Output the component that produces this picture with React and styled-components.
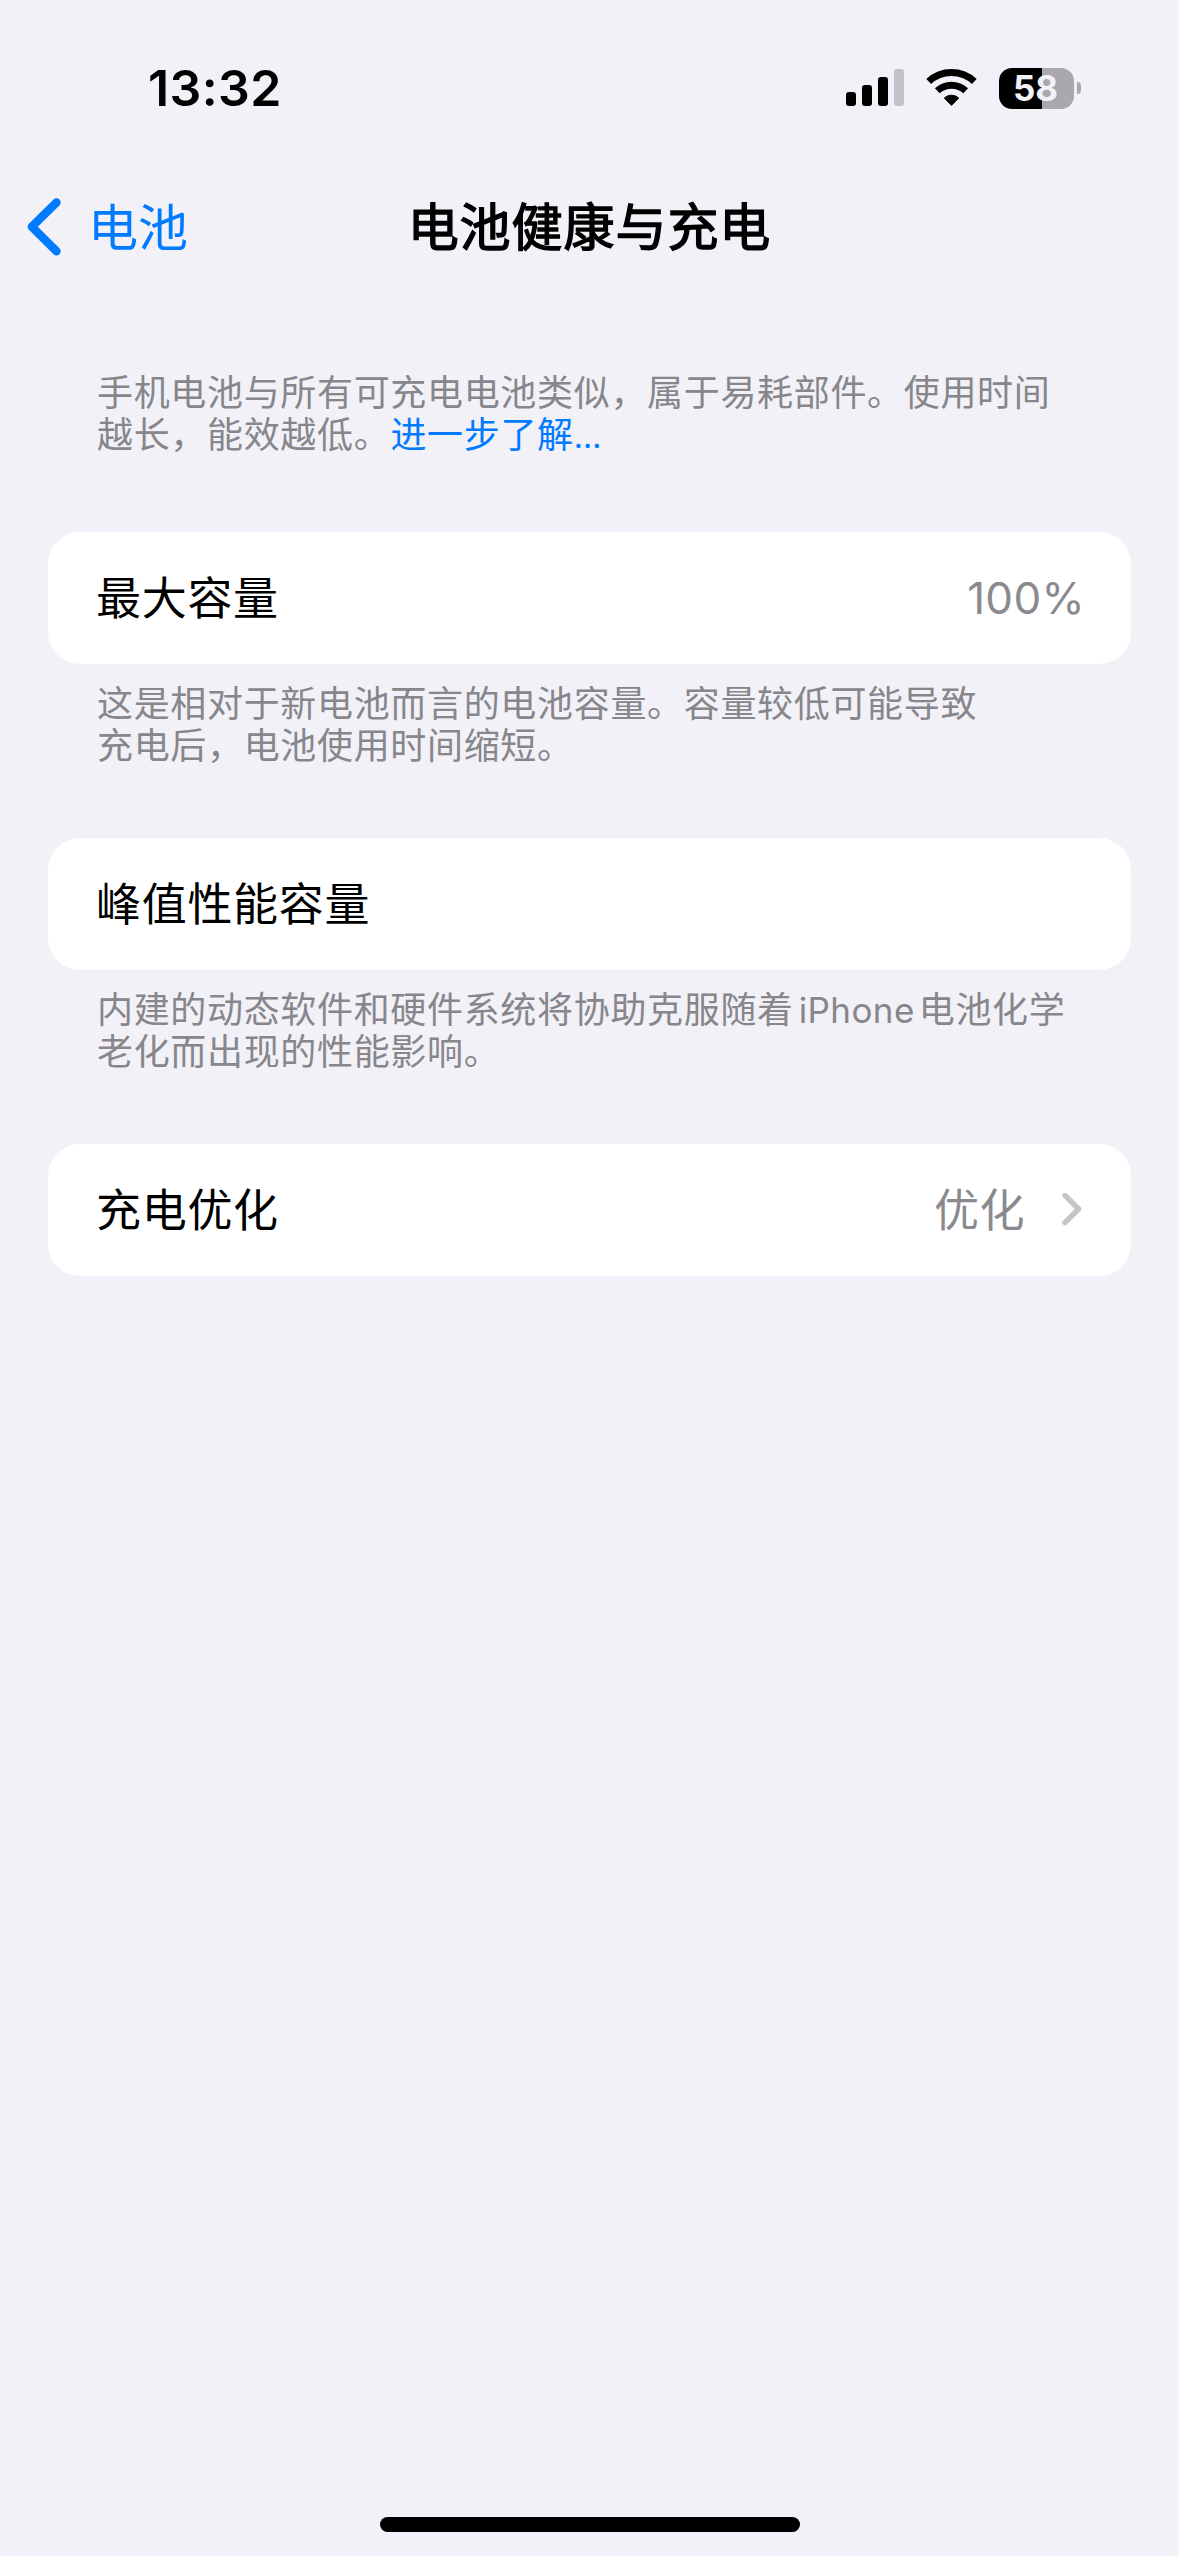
import React from 'react'
import styled, { createGlobalStyle } from 'styled-components';

const GlobalStyle = createGlobalStyle`
  body {
    margin: 0;
    background: #f2f1f7;
  }
  * {
    box-sizing: border-box;
  }
`;

function SignalIcon() {
  return (
    <svg width="58" height="38" viewBox="0 0 58 38">
      <rect x="0" y="23" width="10" height="14" rx="3" />
      <rect x="16" y="16" width="10" height="21" rx="3" />
      <rect x="32" y="8" width="10" height="29" rx="3" />
      <rect x="48" y="0" width="10" height="37" rx="3" fill="#c2c1c7" />
    </svg>
  )
}

function WifiIcon() {
  return (
    <svg width="51" height="38" viewBox="0 0 51 38">
      <g fill="none" stroke="#000" strokeWidth="7">
        <path d="M2.7 12.5A33.5 33.5 0 0 1 48.3 12.5" />
        <path d="M11.3 21.8A20.8 20.8 0 0 1 39.7 21.8" />
      </g>
      <path d="M18.3 29A10.6 10.6 0 0 1 32.7 29L25.5 36.4Z" stroke="#000" strokeLinejoin="round" />
    </svg>
  )
}

function App() {
  return (
    <Phone lang="zh-CN">
      <GlobalStyle />
      <StatusBar>
        <Time>13:32</Time>
        <StatusIcons>
          <SignalIcon />
          <WifiIcon />
          <Battery>
            <BatteryBody>58</BatteryBody>
            <BatteryTip />
          </Battery>
        </StatusIcons>
      </StatusBar>
      <NavBar>
        <BackButton>
          <svg width="34" height="58" viewBox="0 0 34 58">
            <path d="M29.5 4.5L4.8 28.8L29.5 53.2" fill="none" stroke="#007aff" strokeWidth="8.4" strokeLinecap="round" strokeLinejoin="round" />
          </svg>
          <BackText>电池</BackText>
        </BackButton>
        <Title>电池健康与充电</Title>
      </NavBar>
      <Content>
        <Intro>
          手机电池与所有可充电电池类似，属于易耗部件。使用时间<br />
          越长，能效越低。<Link>进一步了解<Dots>…</Dots></Link>
        </Intro>
        <Row>
          <Label>最大容量</Label>
          <Percent>100%</Percent>
        </Row>
        <Footer>
          这是相对于新电池而言的电池容量。容量较低可能导致<br />
          充电后，电池使用时间缩短。
        </Footer>
        <Row>
          <Label>峰值性能容量</Label>
        </Row>
        <Footer>
          内建的动态软件和硬件系统将协助克服随着<Latin>iPhone</Latin>电池化学<br />
          老化而出现的性能影响。
        </Footer>
        <Row>
          <Label>充电优化</Label>
          <Value>
            <ValueText>优化</ValueText>
            <svg width="20" height="34" viewBox="0 0 20 34">
              <path d="M3 2.4L16.6 16L3 29.6" fill="none" stroke="#c5c5c7" strokeWidth="5.4" strokeLinecap="round" strokeLinejoin="round" />
            </svg>
          </Value>
        </Row>
      </Content>
      <HomeIndicator />
    </Phone>
  )
}

const Phone = styled.div`
  display: flex;
  flex-direction: column;
  width: 1179px;
  height: 2556px;
  padding-bottom: 24px;
  background: #f2f1f7;
  color: #000;
  font-family: Inter, "Noto Sans CJK SC", sans-serif;
`;

const StatusBar = styled.header`
  display: flex;
  justify-content: space-between;
  align-items: center;
  height: 176px;
  padding: 0 98px 0 148px;
`;

const Time = styled.div`
  font-size: 50px;
  font-weight: 600;
  letter-spacing: 0.4px;
  line-height: 60px;
`;

const StatusIcons = styled.div`
  display: flex;
  align-items: center;
  gap: 22px;
`;

const Battery = styled.div`
  display: flex;
  align-items: center;
  gap: 3px;
`;

const BatteryBody = styled.div`
  width: 75px;
  height: 41px;
  padding-right: 2px;
  border-radius: 13px;
  background: linear-gradient(to right, #000 43px, #a9a8ad 43px);
  color: #f2f1f7;
  font-size: 35px;
  font-weight: 700;
  line-height: 41px;
  text-align: center;
`;

const BatteryTip = styled.div`
  width: 4px;
  height: 12px;
  border-radius: 0 4px 4px 0;
  background: #a9a8ad;
`;

const NavBar = styled.nav`
  display: grid;
  grid-template-columns: 1fr auto 1fr;
  align-items: center;
  height: 102px;
  padding: 0 27px;
`;

const BackButton = styled.div`
  display: flex;
  align-items: center;
  gap: 27px;
  color: #007aff;
`;

const BackText = styled.span`
  padding-top: 2px;
  font-size: 50px;
  line-height: 60px;
`;

const Title = styled.h1`
  margin: 0;
  padding-top: 2px;
  font-size: 51px;
  font-weight: 400;
  -webkit-text-stroke: 1.4px #000;
  letter-spacing: 0.95px;
  line-height: 60px;
`;

const Content = styled.main`
  flex: 1;
  padding: 94px 48px 0;
`;

const Intro = styled.p`
  margin: 0 0 76px;
  padding: 0 48px 0 49px;
  color: #86868b;
  font-size: 36px;
  letter-spacing: 0.67px;
  line-height: 42px;
  white-space: nowrap;
`;

const Footer = styled(Intro)`
  margin: 19px 0 71px;
`;

const Link = styled.span`
  color: #007aff;
`;

const Dots = styled.span`
  font-size: 32px;
  line-height: 0;
`;

const Latin = styled.span`
  margin: 0 4px 0 5px;
  font-size: 35px;
  letter-spacing: 0.4px;
  line-height: 0;
`;

const Row = styled.div`
  display: flex;
  justify-content: space-between;
  align-items: center;
  height: 132px;
  padding: 0 49px 0 48px;
  border-radius: 32px;
  background: #fff;
`;

const Label = styled.span`
  padding-bottom: 5px;
  font-size: 45px;
  letter-spacing: 0.7px;
`;

const Value = styled.span`
  display: flex;
  align-items: center;
  gap: 37px;
  color: #8a8a8e;
  font-size: 45px;
`;

const ValueText = styled.span`
  padding-bottom: 5px;
  letter-spacing: 0.5px;
`;

const Percent = styled(Value)`
  margin-right: -3px;
  font-size: 44px;
  letter-spacing: 0.3px;
`;

const HomeIndicator = styled.div`
  align-self: center;
  width: 420px;
  height: 15px;
  border-radius: 8px;
  background: #000;
`;

export default App
